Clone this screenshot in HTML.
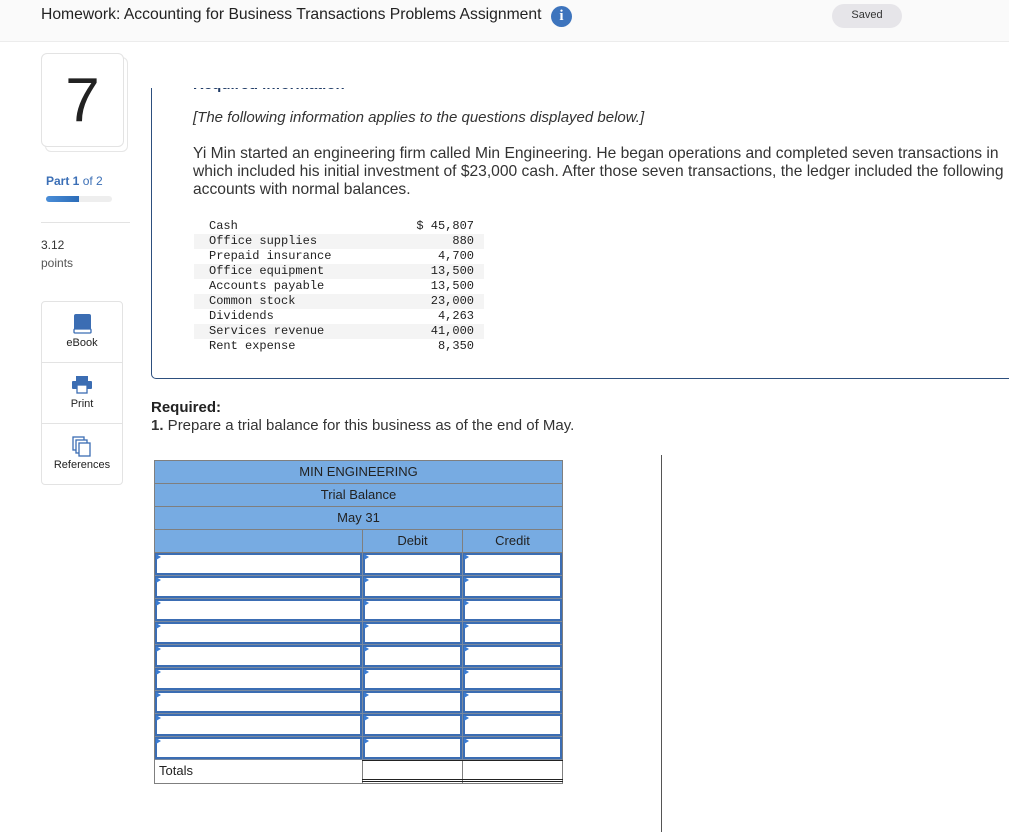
<!DOCTYPE html>
<html><head><meta charset="utf-8">
<style>
*{margin:0;padding:0;box-sizing:border-box}
body{width:1009px;height:832px;overflow:hidden;background:#fff;font-family:"Liberation Sans",sans-serif;color:#222;position:relative}
.abs{position:absolute}
.hdr{left:0;top:0;width:1009px;height:42px;background:#fafafa;border-bottom:1px solid #ececec}
.mono{font-family:"Liberation Mono",monospace;font-size:12px;color:#222}
.lrow{position:absolute;left:194px;width:290px;height:15px;line-height:15px}
.lrow.s{background:#f4f4f4}
.lrow .n{position:absolute;left:15px}
.lrow .v{position:absolute;right:10px}
.tb{left:154px;top:460px;width:409px;border:1px solid #7f7f7f}
.hr{height:23px;background:#77abe2;border-bottom:1px solid #7f7f7f;font-size:13px;line-height:22px;text-align:center;color:#222}
.cell{position:absolute;background:#fff;border:2px solid #3b6db3}
.tri{position:absolute;width:0;height:0;border-top:3px solid transparent;border-bottom:3px solid transparent;border-left:5px solid #3b7bd0}
</style></head><body>
<div class="abs hdr"></div>
<div class="abs" style="left:41px;top:6px;font-size:15.7px;color:#222;white-space:nowrap">Homework: Accounting for Business Transactions Problems Assignment</div>
<div class="abs" style="left:551px;top:6px;width:21px;height:21px;border-radius:50%;background:#3d74bd;color:#fff;font:bold 15px 'Liberation Serif',serif;text-align:center;line-height:21px">i</div>
<div class="abs" style="left:832px;top:4px;width:70px;height:24px;border-radius:12px;background:#e6e5e9;font-size:11px;text-align:center;line-height:23px;color:#333">Saved</div>

<div class="abs" style="left:45px;top:57px;width:83px;height:95px;border:1px solid #e6e6e6;border-radius:6px;background:#fff"></div>
<div class="abs" style="left:41px;top:53px;width:83px;height:94px;border:1px solid #e3e3e3;border-radius:6px;background:#fff;font-size:62px;text-align:center;line-height:94px;color:#222">7</div>
<div class="abs" style="left:46px;top:174px;font-size:12px;color:#3b6fb6"><b>Part 1</b> of 2</div>
<div class="abs" style="left:46px;top:196px;width:66px;height:6px;border-radius:3px;background:#eee"></div>
<div class="abs" style="left:46px;top:196px;width:33px;height:6px;border-radius:3px 0 0 3px;background:linear-gradient(90deg,#4a8ed8,#2c6cb8)"></div>
<div class="abs" style="left:41px;top:222px;width:89px;height:1px;background:#e3e3e3"></div>
<div class="abs" style="left:41px;top:238px;font-size:12px;color:#333">3.12</div>
<div class="abs" style="left:41px;top:256px;font-size:12px;color:#555">points</div>

<div class="abs" style="left:41px;top:301px;width:82px;height:184px;border:1px solid #e3e3e3;border-radius:4px"></div>
<div class="abs" style="left:42px;top:362px;width:80px;height:1px;background:#e3e3e3"></div>
<div class="abs" style="left:42px;top:423px;width:80px;height:1px;background:#e3e3e3"></div>
<svg class="abs" style="left:73px;top:314px" width="19" height="20" viewBox="0 0 19 20"><rect x="1" y="0" width="17" height="17" rx="2" fill="#3b6db3"/><rect x="1" y="15" width="17" height="4" rx="1" fill="#fff" stroke="#3b6db3" stroke-width="1.3"/></svg>
<div class="abs" style="left:42px;top:337px;width:80px;text-align:center;font-size:11px">eBook</div>
<svg class="abs" style="left:72px;top:376px" width="20" height="18" viewBox="0 0 20 18"><rect x="4" y="0" width="12" height="5" fill="#3b6db3"/><rect x="0" y="5" width="20" height="8" rx="1" fill="#3b6db3"/><rect x="5" y="9" width="10" height="8" fill="#fff" stroke="#3b6db3" stroke-width="1.3"/></svg>
<div class="abs" style="left:42px;top:398px;width:80px;text-align:center;font-size:11px">Print</div>
<svg class="abs" style="left:72px;top:436px" width="20" height="21" viewBox="0 0 20 21"><rect x="1" y="1" width="11" height="13" fill="#fff" stroke="#3b6db3" stroke-width="1.3"/><rect x="4" y="4" width="11" height="13" fill="#fff" stroke="#3b6db3" stroke-width="1.3"/><rect x="7" y="7" width="11" height="13" fill="#fff" stroke="#3b6db3" stroke-width="1.3"/></svg>
<div class="abs" style="left:42px;top:459px;width:80px;text-align:center;font-size:11px">References</div>

<div class="abs" style="left:151px;top:88px;width:870px;height:291px;border:1px solid #2d4f7e;border-top:none;border-right:none;border-radius:0 0 0 5px;overflow:hidden">
 <div class="abs" style="left:41px;top:-12px;font-size:15px;font-weight:bold;color:#1f3b66;white-space:nowrap">Required information</div>
</div>
<div class="abs" style="left:193px;top:109px;font-size:15px;font-style:italic;color:#333;white-space:nowrap">[The following information applies to the questions displayed below.]</div>
<div class="abs" style="left:193px;top:145px;font-size:15.6px;line-height:18px;color:#333;white-space:nowrap">Yi Min started an engineering firm called Min Engineering. He began operations and completed seven transactions in<br>which included his initial investment of $23,000 cash. After those seven transactions, the ledger included the following<br>accounts with normal balances.</div>

<div class="mono">
<div class="lrow" style="top:219px"><span class="n">Cash</span><span class="v">$ 45,807</span></div>
<div class="lrow s" style="top:234px"><span class="n">Office supplies</span><span class="v">880</span></div>
<div class="lrow" style="top:249px"><span class="n">Prepaid insurance</span><span class="v">4,700</span></div>
<div class="lrow s" style="top:264px"><span class="n">Office equipment</span><span class="v">13,500</span></div>
<div class="lrow" style="top:279px"><span class="n">Accounts payable</span><span class="v">13,500</span></div>
<div class="lrow s" style="top:294px"><span class="n">Common stock</span><span class="v">23,000</span></div>
<div class="lrow" style="top:309px"><span class="n">Dividends</span><span class="v">4,263</span></div>
<div class="lrow s" style="top:324px"><span class="n">Services revenue</span><span class="v">41,000</span></div>
<div class="lrow" style="top:339px"><span class="n">Rent expense</span><span class="v">8,350</span></div>
</div>

<div class="abs" style="left:151px;top:399px;font-size:15px;font-weight:bold;color:#222">Required:</div>
<div class="abs" style="left:151px;top:417px;font-size:15px;color:#333;white-space:nowrap"><b>1.</b> Prepare a trial balance for this business as of the end of May.</div>

<div class="abs" style="left:661px;top:455px;width:1px;height:377px;background:#555"></div>

<div class="abs tb">
 <div class="hr">MIN ENGINEERING</div>
 <div class="hr">Trial Balance</div>
 <div class="hr">May 31</div>
 <div class="hr" style="position:relative;height:23px">
  <div class="abs" style="left:207px;top:0;width:1px;height:23px;background:#7f7f7f"></div>
  <div class="abs" style="left:307px;top:0;width:1px;height:23px;background:#7f7f7f"></div>
  <div class="abs" style="left:208px;width:99px;top:0">Debit</div>
  <div class="abs" style="left:308px;width:99px;top:0">Credit</div>
 </div>
 <div style="position:relative;height:207px;background:#7a8aa0"></div>
 <div style="position:relative;height:23px;background:#fff;font-size:13px;line-height:22px">
  <span style="padding-left:4px">Totals</span>
  <div class="abs" style="left:207px;top:0;width:1px;height:23px;background:#7f7f7f"></div>
  <div class="abs" style="left:307px;top:0;width:1px;height:23px;background:#7f7f7f"></div>
  <div class="abs" style="left:207px;top:0;width:201px;height:1px;background:#222"></div>
  <div class="abs" style="left:207px;top:19px;width:201px;height:3px;border-top:1px solid #222;border-bottom:1px solid #222"></div>
 </div>
</div>
<div id="cells"></div>
<script>
var h='';
for(var i=0;i<9;i++){
 var y=553+i*23;
 [[155,207],[363,99],[463,99]].forEach(function(c){
  h+='<div class="cell" style="left:'+c[0]+'px;top:'+y+'px;width:'+c[1]+'px;height:22px"></div>';
  h+='<div class="tri" style="left:'+(c[0]+1)+'px;top:'+(y+1)+'px"></div>';
 });
}
document.getElementById('cells').innerHTML=h;
</script>
</body></html>
